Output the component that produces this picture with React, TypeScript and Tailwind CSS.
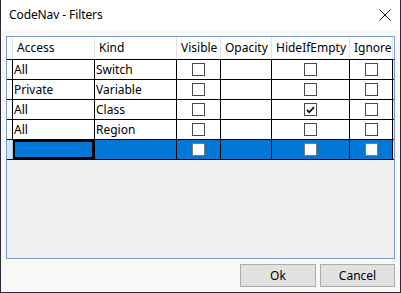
import React from "react";

const cols = [
  { key: "access", label: "Access", w: "w-[82px]", type: "text" },
  { key: "kind", label: "Kind", w: "w-[82px]", type: "text" },
  { key: "visible", label: "Visible", w: "w-[44px]", type: "check" },
  { key: "opacity", label: "Opacity", w: "w-[51px]", type: "text" },
  { key: "hide", label: "HideIfEmpty", w: "w-[78px]", type: "check" },
  { key: "ignore", label: "Ignore", w: "w-[43px]", type: "check" },
] as const;

type Row = { access: string; kind: string; visible: boolean; opacity: string; hide: boolean; ignore: boolean };

const rows: Row[] = [
  { access: "All", kind: "Switch", visible: false, opacity: "", hide: false, ignore: false },
  { access: "Private", kind: "Variable", visible: false, opacity: "", hide: false, ignore: false },
  { access: "All", kind: "Class", visible: false, opacity: "", hide: true, ignore: false },
  { access: "All", kind: "Region", visible: false, opacity: "", hide: false, ignore: false },
];

function Check({ checked, sel }: { checked: boolean; sel?: boolean }) {
  return (
    <div
      className={
        "w-[13px] h-[13px] bg-white border flex items-center justify-center " +
        (sel ? "border-[#7a7a7a]" : "border-[#4a4a4a]")
      }
    >
      {checked && (
        <svg width="9" height="8" viewBox="0 0 9 8">
          <path d="M1 4 L3.3 6.3 L8 1.2" fill="none" stroke="#111" strokeWidth="1.8" />
        </svg>
      )}
    </div>
  );
}

export default function App() {
  return (
    <div
      className="w-[401px] h-[293px] bg-[#f8f8f8] border-l border-r border-b border-[#2a2a3a] flex flex-col text-[12px] text-black"
      style={{ fontFamily: '"Noto Sans", "Open Sans", sans-serif' }}
    >
      <div className="h-[30px] bg-white flex items-center justify-between pl-[8px] pr-[7px]">
        <span className="text-[12px] tracking-[-0.1px]">CodeNav - Filters</span>
        <svg width="12" height="12" viewBox="0 0 12 12" className="mr-[2px]">
          <path d="M0.5 0.5 L11.5 11.5 M11.5 0.5 L0.5 11.5" stroke="#111" strokeWidth="1" />
        </svg>
      </div>
      <div className="flex-1 flex flex-col pl-[5px] pr-[5px] pt-[6px]">
        <div className="w-[389px] h-[223px] border border-[#7a9cc8] bg-[#efefef] flex flex-col">
          {/* header */}
          <div className="flex h-[22px] bg-white">
            <div className="w-[6px] border-r border-[#e3e3e3]" />
            {cols.map((c) => (
              <div
                key={c.key}
                className={c.w + " border-r border-[#e3e3e3] flex items-center pl-[4px] leading-none whitespace-nowrap overflow-hidden"}
              >
                {c.label}
              </div>
            ))}
          </div>
          {/* rows */}
          <div className="flex flex-col">
            {rows.map((r, i) => (
              <div key={i} className={"flex h-[20px] border-b border-black" + (i === 0 ? " border-t h-[21px]" : "")}>
                <div className="w-[6px] bg-white border-r border-black" />
                {cols.map((c) => (
                  <div
                    key={c.key}
                    className={c.w + " bg-white border-r border-black flex items-center " + (c.type === "check" ? "justify-center" : "pl-[1px]")}
                  >
                    {c.type === "check" ? (
                      <Check checked={r[c.key as "visible" | "hide" | "ignore"]} />
                    ) : (
                      <span className="leading-none whitespace-nowrap">{r[c.key as "access" | "kind" | "opacity"]}</span>
                    )}
                  </div>
                ))}
              </div>
            ))}
            <div className="flex h-[20px] border-b border-black">
              <div className="w-[6px] bg-[#cce8ff] border-r border-[#99c9ef]" />
              {cols.map((c, j) => (
                <div
                  key={c.key}
                  className={c.w + " bg-[#0078d7] border-r border-black flex items-center justify-center"}
                >
                  {j === 0 ? (
                    <div className="w-full h-full border-[2px] border-black" />
                  ) : (
                    c.type === "check" && <Check checked={false} sel />
                  )}
                </div>
              ))}
            </div>
          </div>
        </div>
        <div className="flex justify-end gap-[4px] mt-[5px]">
          <button className="w-[76px] h-[23px] bg-[#e1e1e1] border border-[#adadad] flex items-center justify-center text-[12px]">
            Ok
          </button>
          <button className="w-[75px] h-[23px] bg-[#e1e1e1] border border-[#adadad] flex items-center justify-center text-[12px]">
            Cancel
          </button>
        </div>
      </div>
    </div>
  );
}
